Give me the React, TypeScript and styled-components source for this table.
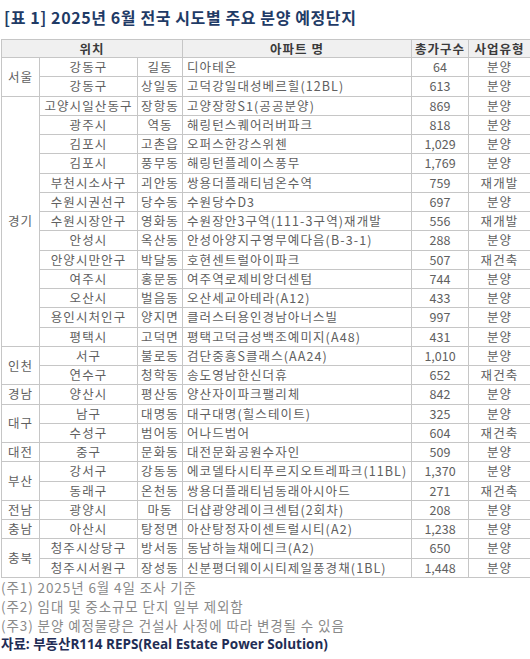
import * as React from "react";
import styled, { createGlobalStyle } from "styled-components";

const GlobalStyle = createGlobalStyle`
  html, body {
    margin: 0;
    padding: 0;
    background: #ffffff;
  }
  body {
    font-family: "Noto Sans CJK KR", "Noto Sans", sans-serif;
  }
`;

interface Row {
  region?: string;
  span?: number;
  city: string;
  dong: string;
  name: string;
  units: string;
  type: string;
}

const rows: Row[] = [
  { region: "서울", span: 2, city: "강동구", dong: "길동", name: "디아테온", units: "64", type: "분양" },
  { city: "강동구", dong: "상일동", name: "고덕강일대성베르힐(12BL)", units: "613", type: "분양" },
  { region: "경기", span: 13, city: "고양시일산동구", dong: "장항동", name: "고양장항S1(공공분양)", units: "869", type: "분양" },
  { city: "광주시", dong: "역동", name: "해링턴스퀘어러버파크", units: "818", type: "분양" },
  { city: "김포시", dong: "고촌읍", name: "오퍼스한강스위첸", units: "1,029", type: "분양" },
  { city: "김포시", dong: "풍무동", name: "해링턴플레이스풍무", units: "1,769", type: "분양" },
  { city: "부천시소사구", dong: "괴안동", name: "쌍용더플래티넘온수역", units: "759", type: "재개발" },
  { city: "수원시권선구", dong: "당수동", name: "수원당수D3", units: "697", type: "분양" },
  { city: "수원시장안구", dong: "영화동", name: "수원장안3구역(111-3구역)재개발", units: "556", type: "재개발" },
  { city: "안성시", dong: "옥산동", name: "안성아양지구영무예다음(B-3-1)", units: "288", type: "분양" },
  { city: "안양시만안구", dong: "박달동", name: "호현센트럴아이파크", units: "507", type: "재건축" },
  { city: "여주시", dong: "홍문동", name: "여주역로제비앙더센텀", units: "744", type: "분양" },
  { city: "오산시", dong: "벌음동", name: "오산세교아테라(A12)", units: "433", type: "분양" },
  { city: "용인시처인구", dong: "양지면", name: "클러스터용인경남아너스빌", units: "997", type: "분양" },
  { city: "평택시", dong: "고덕면", name: "평택고덕금성백조예미지(A48)", units: "431", type: "분양" },
  { region: "인천", span: 2, city: "서구", dong: "불로동", name: "검단중흥S클래스(AA24)", units: "1,010", type: "분양" },
  { city: "연수구", dong: "청학동", name: "송도영남한신더휴", units: "652", type: "재건축" },
  { region: "경남", span: 1, city: "양산시", dong: "평산동", name: "양산자이파크팰리체", units: "842", type: "분양" },
  { region: "대구", span: 2, city: "남구", dong: "대명동", name: "대구대명(힐스테이트)", units: "325", type: "분양" },
  { city: "수성구", dong: "범어동", name: "어나드범어", units: "604", type: "재건축" },
  { region: "대전", span: 1, city: "중구", dong: "문화동", name: "대전문화공원수자인", units: "509", type: "분양" },
  { region: "부산", span: 2, city: "강서구", dong: "강동동", name: "에코델타시티푸르지오트레파크(11BL)", units: "1,370", type: "분양" },
  { city: "동래구", dong: "온천동", name: "쌍용더플래티넘동래아시아드", units: "271", type: "재건축" },
  { region: "전남", span: 1, city: "광양시", dong: "마동", name: "더샵광양레이크센텀(2회차)", units: "208", type: "분양" },
  { region: "충남", span: 1, city: "아산시", dong: "탕정면", name: "아산탕정자이센트럴시티(A2)", units: "1,238", type: "분양" },
  { region: "충북", span: 2, city: "청주시상당구", dong: "방서동", name: "동남하늘채에디크(A2)", units: "650", type: "분양" },
  { city: "청주시서원구", dong: "장성동", name: "신분평더웨이시티제일풍경채(1BL)", units: "1,448", type: "분양" },
];

const notes = [
  "(주1) 2025년 6월 4일 조사 기준",
  "(주2) 임대 및 중소규모 단지 일부 제외함",
  "(주3) 분양 예정물량은 건설사 사정에 따라 변경될 수 있음",
];

const Page = styled.div`
  width: 530px;
  height: 659px;
  overflow: hidden;
  display: flex;
  flex-direction: column;
  padding-top: 7px;
  box-sizing: border-box;
`;

const Title = styled.h1`
  margin: 0 0 12px 4px;
  font-family: "Noto Sans CJK KR", sans-serif;
  font-size: 16px;
  font-weight: 700;
  line-height: 20px;
  color: #1f3b66;
  letter-spacing: 0.6px;
`;

const Table = styled.table`
  width: 529px;
  margin-left: 1px;
  border-collapse: collapse;
  table-layout: fixed;
  font-family: "Noto Sans CJK KR", sans-serif;
  font-size: 12.5px;
  color: #606060;
`;

const Col = styled.col<{ $w: number }>`
  width: ${({ $w }) => $w}px;
`;

const HeadCell = styled.th`
  height: 17px;
  padding: 0;
  background: #f0f0f0;
  border: 1px solid #c6c6c6;
  font-weight: 700;
  color: #3a3a3a;
  line-height: 17px;
  letter-spacing: 1px;
  text-align: center;
  white-space: nowrap;
`;

const Cell = styled.td<{ $left?: boolean; $num?: boolean }>`
  height: 18.25px;
  padding: ${({ $left }) => ($left ? "0 0 0 4px" : "0")};
  border: 1px solid #c6c6c6;
  line-height: 18px;
  letter-spacing: ${({ $num }) => ($num ? "0" : "1.1px")};
  text-align: ${({ $left }) => ($left ? "left" : "center")};
  white-space: nowrap;
  overflow: hidden;
`;

const Notes = styled.div`
  display: flex;
  flex-direction: column;
  padding-left: 1px;
`;

const Note = styled.p`
  margin: 0;
  font-family: "Noto Sans CJK KR", sans-serif;
  font-size: 13.5px;
  line-height: 19px;
  letter-spacing: 0.9px;
  color: #8a8a8a;
`;

const Source = styled.p`
  margin: 0;
  font-family: "Open Sans", "Noto Sans CJK KR", sans-serif;
  font-size: 13.5px;
  font-weight: 700;
  line-height: 19px;
  color: #1f2d55;
`;

export default function App() {
  return (
    <>
      <GlobalStyle />
      <Page>
        <Title>[표 1] 2025년 6월 전국 시도별 주요 분양 예정단지</Title>
        <Table>
          <colgroup>
            <Col $w={38} />
            <Col $w={98} />
            <Col $w={45} />
            <Col $w={229} />
            <Col $w={57} />
            <Col $w={62} />
          </colgroup>
          <thead>
            <tr>
              <HeadCell colSpan={3}>위치</HeadCell>
              <HeadCell>아파트 명</HeadCell>
              <HeadCell>총가구수</HeadCell>
              <HeadCell>사업유형</HeadCell>
            </tr>
          </thead>
          <tbody>
            {rows.map((r, i) => (
              <tr key={i}>
                {r.region && <Cell rowSpan={r.span}>{r.region}</Cell>}
                <Cell>{r.city}</Cell>
                <Cell>{r.dong}</Cell>
                <Cell $left>{r.name}</Cell>
                <Cell $num>{r.units}</Cell>
                <Cell>{r.type}</Cell>
              </tr>
            ))}
          </tbody>
        </Table>
        <Notes>
          {notes.map((n) => (
            <Note key={n}>{n}</Note>
          ))}
          <Source>자료: 부동산R114 REPS(Real Estate Power Solution)</Source>
        </Notes>
      </Page>
    </>
  );
}
